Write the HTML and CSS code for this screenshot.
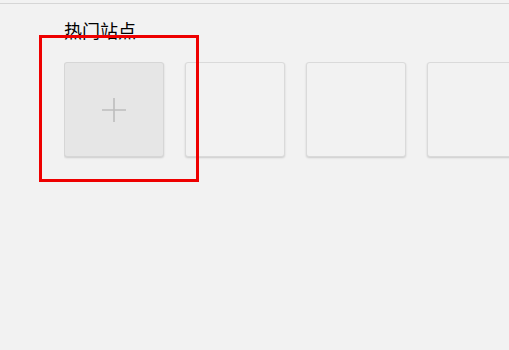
FILE: index.html
```html
<!DOCTYPE html>
<html lang="zh">
<head>
<meta charset="utf-8">
<link rel="stylesheet" href="styles.css">
</head>
<body>
<div class="page">
  <div class="topbar"></div>
  <section class="hot">
    <h2 class="title">热门站点</h2>
    <div class="tiles">
      <div class="tile tile-add">
        <svg class="plus" width="26" height="26" viewBox="0 0 26 26">
          <path d="M13 1v24M1 13h24" stroke="#bdbdbd" stroke-width="1.6" fill="none"/>
        </svg>
      </div>
      <div class="tile"></div>
      <div class="tile"></div>
      <div class="tile"></div>
    </div>
    <div class="highlight"></div>
  </section>
</div>
</body>
</html>
```
FILE: styles.css
```css
html, body {
  margin: 0;
  padding: 0;
  background: #f2f2f2;
  overflow: hidden;
}
.page {
  width: 509px;
  height: 350px;
  position: relative;
  overflow: hidden;
  font-family: "Noto Sans CJK SC", "Noto Sans", sans-serif;
}
.topbar {
  height: 3px;
  border-bottom: 1px solid #d6d6d6;
}
.hot {
  position: relative;
  padding-left: 64px;
}
.title {
  margin: 0;
  padding-top: 14px;
  font-size: 18px;
  font-weight: normal;
  line-height: 24px;
  color: #000;
  height: 24px;
}
.tiles {
  display: flex;
  gap: 21px;
  margin-top: 20px;
  padding-bottom: 3px;
  overflow: hidden;
}
.tile {
  flex: none;
  width: 98px;
  height: 93px;
  border: 1px solid #dadada;
  border-radius: 3px;
  background: #f2f2f2;
  box-shadow: 0 1px 2px rgba(0, 0, 0, 0.16);
  display: flex;
  align-items: center;
  justify-content: center;
}
.tile-add {
  background: #e6e6e6;
  border-color: #d6d6d6;
}
.plus {
  display: block;
}
.highlight {
  position: absolute;
  left: 39px;
  top: 31px;
  width: 154px;
  height: 141px;
  border: 3px solid #ee0000;
}
```
